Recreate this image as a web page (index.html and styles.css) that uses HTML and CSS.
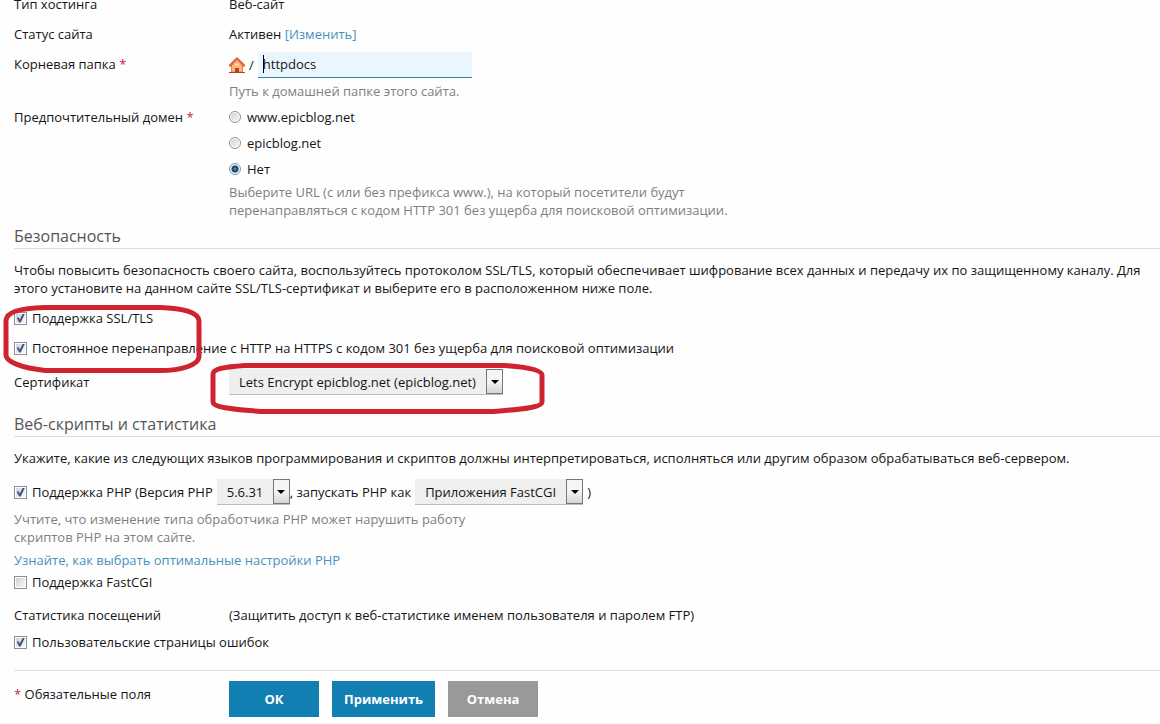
FILE: index.html
```html
<!DOCTYPE html>
<html lang="ru">
<head>
<meta charset="utf-8">
<title>Настройки хостинга</title>
<link rel="stylesheet" href="styles.css">
</head>
<body>
<form class="page">
  <div class="row">
    <span class="label">Тип хостинга</span>
    <span>Веб-сайт</span>
  </div>
  <div class="row row-status">
    <span class="label">Статус сайта</span>
    <span>Активен <a class="link" href="#">[Изменить]</a></span>
  </div>
  <div class="row row-root">
    <label class="label label-root" for="root">Корневая папка <span class="req">*</span></label>
    <div>
      <div class="path">
        <svg class="home" viewBox="0 0 16 16" aria-hidden="true">
          <path d="M2.5 7.5h11v7.500h-11z" fill="#fbb67c" stroke="#e8834a"/>
          <path d="M0 15.500h16" stroke="#a8492c"/>
          <path d="M8 1.600L1 8.600M8 1.600l7 7" fill="none" stroke="#e2633a" stroke-width="2.400" stroke-linecap="round"/>
          <path d="M8 3.500L3 8.500h10z" fill="#fbb67c"/>
          <path d="M6 11h4v4H6z" fill="#b8461c"/>
          <path d="M6.500 6.500h3v2h-3z" fill="#ffe3b8"/>
        </svg>
        <span>/</span>
        <div class="field">
          <input class="input" id="root" type="text" value="httpdocs">
          <span class="caret"></span>
        </div>
      </div>
      <p class="hint hint-root">Путь к домашней папке этого сайта.</p>
    </div>
  </div>
  <div class="row row-domain">
    <span class="label" id="domain">Предпочтительный домен <span class="req">*</span></span>
    <div role="radiogroup" aria-labelledby="domain">
      <div class="radios">
        <label class="check check-radio"><input class="radio" type="radio" name="domain">www.epicblog.net</label>
        <label class="check check-radio"><input class="radio" type="radio" name="domain">epicblog.net</label>
        <label class="check check-radio"><input class="radio" type="radio" name="domain" checked>Нет</label>
      </div>
      <p class="hint hint-domain">Выберите URL (с или без префикса www.), на который посетители будут перенаправляться с кодом HTTP 301 без ущерба для поисковой оптимизации.</p>
    </div>
  </div>

  <h2 class="heading">Безопасность</h2>
  <p class="text">Чтобы повысить безопасность своего сайта, воспользуйтесь протоколом SSL/TLS, который обеспечивает шифрование всех данных и передачу их по защищенному каналу. Для этого установите на данном сайте SSL/TLS-сертификат и выберите его в расположенном ниже поле.</p>
  <div class="ssl">
    <label class="check"><input class="box" type="checkbox" checked>Поддержка SSL/TLS</label>
    <label class="check"><input class="box" type="checkbox" checked>Постоянное перенаправление с HTTP на HTTPS с кодом 301 без ущерба для поисковой оптимизации</label>
    <svg class="mark mark-ssl" viewBox="0 0 204 72" aria-hidden="true">
      <path d="M4 16C5 8 18 4 43 3.500H158C182 4 197 9 197 17V53C196 61 180 66.500 158 66.500H43C20 64 4 58 4 51Z"/>
    </svg>
  </div>
  <div class="row row-cert">
    <label class="label" for="cert">Сертификат</label>
    <div class="pick">
      <select class="select select-cert" id="cert"><option>Lets Encrypt epicblog.net (epicblog.net)</option></select>
      <span class="arrow"></span>
      <svg class="mark mark-cert" viewBox="0 0 340 54" aria-hidden="true">
        <path d="M4 11C4 6 14 4 36 2.500H296C318 4 333 7 333 12V39C333 44 316 46 285 48.500H52C20 46 4 44 4 39Z"/>
      </svg>
    </div>
  </div>

  <h2 class="heading heading-web">Веб-скрипты и статистика</h2>
  <p class="text">Укажите, какие из следующих языков программирования и скриптов должны интерпретироваться, исполняться или другим образом обрабатываться веб-сервером.</p>
  <div class="php">
    <label class="check"><input class="box" type="checkbox" checked>Поддержка PHP (Версия PHP</label>
    <div class="pick pick-first">
      <select class="select select-version" aria-label="Версия PHP"><option>5.6.31</option></select>
      <span class="arrow"></span>
    </div>
    <label for="handler">, запускать PHP как</label>
    <div class="pick pick-second">
      <select class="select select-handler" id="handler"><option>Приложения FastCGI</option></select>
      <span class="arrow"></span>
    </div>
    <span>)</span>
  </div>
  <p class="hint hint-php">Учтите, что изменение типа обработчика PHP может нарушить работу скриптов PHP на этом сайте.</p>
  <p class="advice"><a class="link" href="#">Узнайте, как выбрать оптимальные настройки PHP</a></p>
  <label class="check check-cgi"><input class="box" type="checkbox">Поддержка FastCGI</label>
  <div class="row row-stats">
    <span class="label">Статистика посещений</span>
    <span>(Защитить доступ к веб-статистике именем пользователя и паролем FTP)</span>
  </div>
  <label class="check check-errors"><input class="box" type="checkbox" checked>Пользовательские страницы ошибок</label>

  <div class="row footer">
    <span class="label label-footer"><span class="req">*</span> Обязательные поля</span>
    <div class="buttons">
      <button class="button" type="button">ОК</button>
      <button class="button" type="button">Применить</button>
      <button class="button button-cancel" type="button">Отмена</button>
    </div>
  </div>
</form>
</body>
</html>
```
FILE: styles.css
```css
* {
  box-sizing: border-box;
}

body {
  margin: 0;
  background: #fefefe;
  color: #151515;
  font: 13px/18px "Open Sans", "Noto Sans", sans-serif;
}

.page {
  margin-top: -5px;
  padding-left: 14px;
}

p,
h2 {
  margin: 0;
}

.row {
  display: flex;
  align-items: flex-start;
}

.label {
  flex: none;
  width: 215px;
}

.req {
  color: #c4262e;
}

.link {
  color: #4692bd;
  text-decoration: none;
}

.hint {
  color: #7f7f7f;
}

.row-status {
  margin-top: 12px;
}

.row-root {
  margin-top: 9px;
}

.label-root {
  padding-top: 3px;
}

.path {
  display: flex;
  align-items: center;
  gap: 4px;
}

.home {
  width: 16px;
  height: 16px;
}

.field {
  position: relative;
}

.input {
  display: block;
  width: 214px;
  height: 26px;
  padding: 0 5px 2px;
  border: 0;
  border-bottom: 1px solid #2e86a8;
  background: #ebf5fd;
  color: inherit;
  font: inherit;
  outline: 0;
}

.caret {
  position: absolute;
  top: 3px;
  left: 5px;
  width: 1px;
  height: 18px;
  background: #000;
}

.hint-root {
  margin-top: 4px;
}

.row-domain {
  margin-top: 8px;
}

.radios {
  display: flex;
  flex-direction: column;
  gap: 8px;
}

.check {
  display: flex;
  align-items: center;
  gap: 5px;
}

.check-radio {
  gap: 6px;
}

.radio,
.box {
  flex: none;
  appearance: none;
  width: 12px;
  height: 12px;
  margin: 0;
  border: 1px solid #8e8f8f;
  background: linear-gradient(135deg, #cfd2d6, #f8f8f8) content-box #f4f4f4;
  padding: 1px;
}

.radio {
  border-radius: 50%;
}

.radio:checked {
  border-color: #7d9bad;
  background: radial-gradient(circle, #5fa5c4 0, #1c4e6b 2px, #153c55 3px, #e6f0f5 4px);
}

.box {
  width: 13px;
  height: 13px;
}

.box:checked {
  display: grid;
  place-items: center;
}

.box:checked::before {
  content: "";
  width: 9px;
  height: 9px;
  background: #44528c;
  clip-path: polygon(8% 48%, 30% 42%, 42% 66%, 76% 0, 100% 0, 52% 100%, 34% 100%);
}

.hint-domain {
  max-width: 510px;
  margin-top: 5px;
}

.heading {
  margin-top: 6px;
  padding-bottom: 1px;
  border-bottom: 1px solid #dcdcdc;
  color: #555;
  font-size: 16px;
  font-weight: 400;
  line-height: 22px;
}

.text {
  margin-top: 12px;
  padding-right: 12px;
}

.ssl {
  position: relative;
  display: flex;
  flex-direction: column;
  gap: 12px;
  margin-top: 12px;
}

.mark {
  position: absolute;
  fill: none;
  stroke: #cf2430;
  stroke-width: 5px;
  stroke-linejoin: round;
  pointer-events: none;
}

.mark-ssl {
  top: -5px;
  left: -12px;
  width: 204px;
  height: 72px;
}

.mark-cert {
  top: -6px;
  left: -20px;
  width: 340px;
  height: 54px;
}

.row-cert {
  align-items: center;
  margin-top: 12px;
}

.pick {
  position: relative;
}

.select {
  display: block;
  appearance: none;
  height: 26px;
  padding: 0 18px 0 10px;
  border: 0;
  border-bottom: 1px solid #bdbdbd;
  border-radius: 0;
  background: #efefef;
  color: inherit;
  font: inherit;
}

.select-cert {
  width: 274px;
}

.select-version {
  width: 73px;
}

.select-handler {
  width: 168px;
}

.arrow {
  position: absolute;
  top: 0;
  right: 0;
  display: grid;
  place-items: center;
  width: 17px;
  height: 25px;
  border: 1px solid #777;
  background: linear-gradient(#f5f5f5 50%, #d5d5d5);
  pointer-events: none;
}

.arrow::before {
  content: "";
  border: 4px solid transparent;
  border-top-color: #000;
  border-bottom: 0;
}

.heading-web {
  margin-top: 18px;
}

.php {
  display: flex;
  align-items: center;
  margin-top: 12px;
}

.pick-first {
  margin-left: 4px;
}

.pick-second {
  margin: 0 4px;
}

.hint-php {
  max-width: 470px;
  margin-top: 5px;
}

.advice {
  margin-top: 5px;
}

.check-cgi {
  margin-top: 4px;
}

.row-stats {
  margin-top: 15px;
}

.check-errors {
  margin-top: 9px;
}

.footer {
  margin-top: 19px;
  padding-top: 10px;
  border-top: 1px solid #dcdcdc;
}

.label-footer {
  padding-top: 4px;
}

.buttons {
  display: flex;
  gap: 13px;
}

.button {
  min-width: 90px;
  height: 36px;
  padding: 0 12px;
  border: 0;
  background: #117fb2;
  color: #fff;
  font: inherit;
  font-weight: 700;
}

.button-cancel {
  background: #999;
}
```
